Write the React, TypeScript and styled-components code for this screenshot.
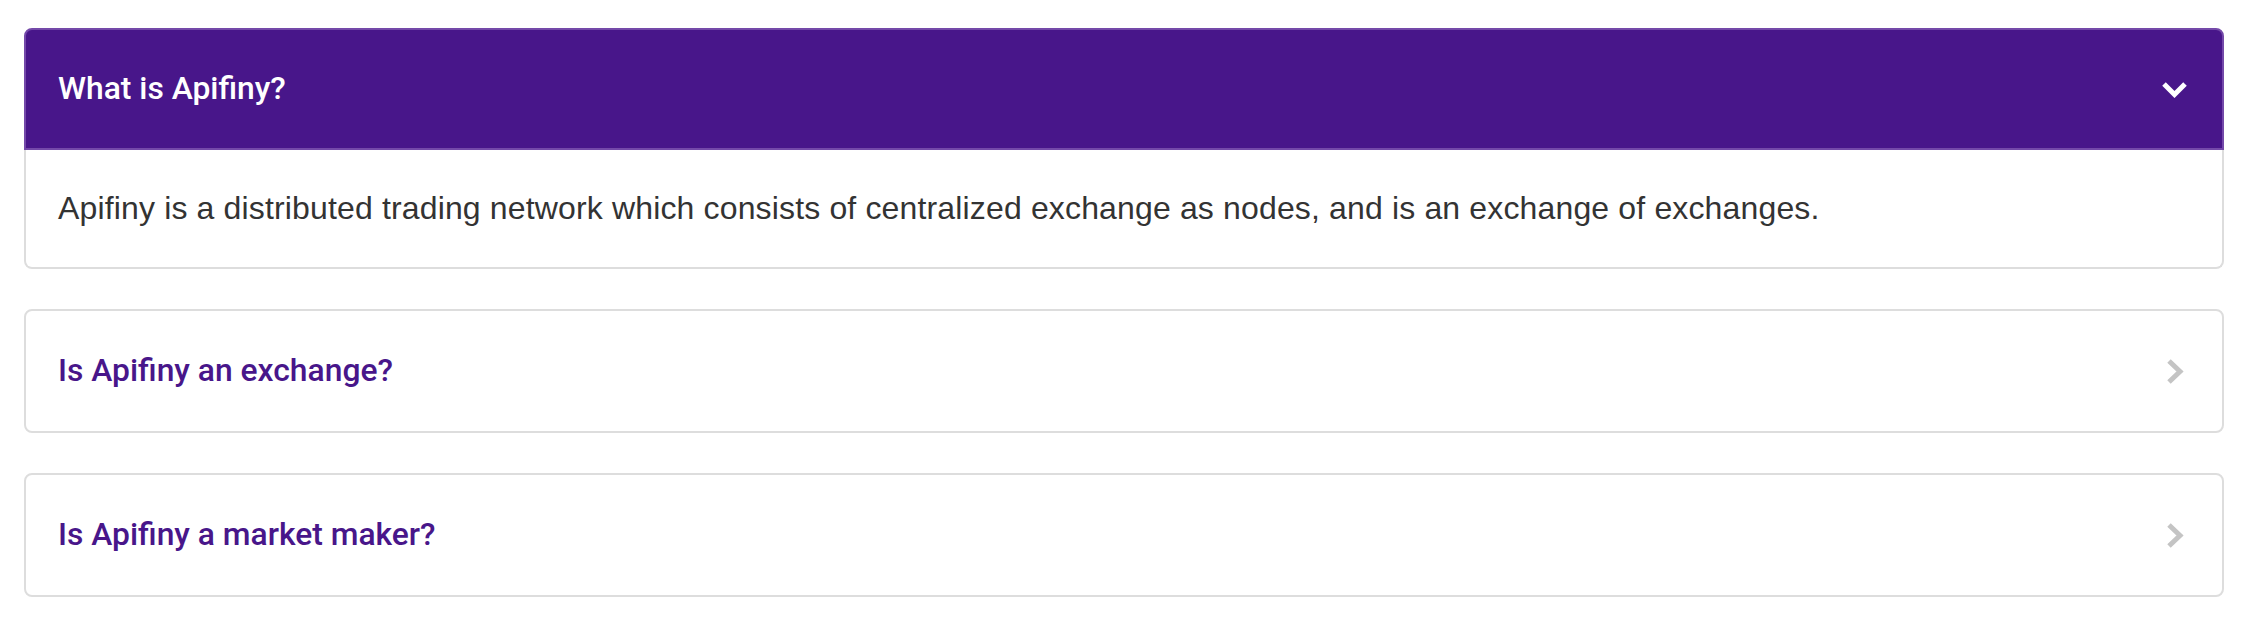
import React, { useState } from "react";
import styled, { createGlobalStyle } from "styled-components";

const GlobalStyle = createGlobalStyle`
  html, body {
    margin: 0;
    padding: 0;
    background: #ffffff;
  }
  * { box-sizing: border-box; }
`;

const PURPLE = "#48168a";

const Page = styled.div`
  padding: 28px 20px 0 24px;
  display: flex;
  flex-direction: column;
  gap: 40px;
`;

const Card = styled.div`
  display: flex;
  flex-direction: column;
`;

const Header = styled.div<{ $open: boolean }>`
  height: ${(p) => (p.$open ? 122 : 124)}px;
  display: flex;
  align-items: center;
  justify-content: space-between;
  padding: 0 34px 0 32px;
  background: ${(p) => (p.$open ? PURPLE : "#ffffff")};
  border: 2px solid ${(p) => (p.$open ? "#7449a9" : "#dddddd")};
  border-radius: ${(p) => (p.$open ? "8px 8px 0 0" : "8px")};
  cursor: pointer;
`;

const Question = styled.h3<{ $open: boolean }>`
  margin: 0;
  font-family: Roboto, "Noto Sans", sans-serif;
  font-weight: 500;
  font-size: 31.8px;
  line-height: 1;
  color: ${(p) => (p.$open ? "#ffffff" : PURPLE)};
`;

const IconBox = styled.span`
  width: 27px;
  height: 27px;
  display: flex;
  align-items: center;
  justify-content: center;
`;

const Body = styled.div`
  height: 119px;
  display: flex;
  align-items: center;
  padding: 0 32px;
  border: 2px solid #dddddd;
  border-top: none;
  border-radius: 0 0 8px 8px;
  font-family: "Liberation Sans", Arial, sans-serif;
  font-size: 32px;
  letter-spacing: 0.15px;
  color: #333333;
`;

const ChevronDown = () => (
  <svg width="27" height="17" viewBox="0 0 27 17">
    <polyline points="3,3 13.5,13.5 24,3" fill="none" stroke="#ffffff" strokeWidth="5" />
  </svg>
);

const ChevronRight = () => (
  <svg width="18" height="27" viewBox="0 0 18 27">
    <polyline points="3,3 14,13.5 3,24" fill="none" stroke="#c4c4c4" strokeWidth="5" />
  </svg>
);

const items = [
  {
    q: "What is Apifiny?",
    a: "Apifiny is a distributed trading network which consists of centralized exchange as nodes, and is an exchange of exchanges.",
  },
  { q: "Is Apifiny an exchange?", a: "" },
  { q: "Is Apifiny a market maker?", a: "" },
];

export default function App() {
  const [open, setOpen] = useState<number>(0);
  return (
    <>
      <GlobalStyle />
      <Page>
        {items.map((it, i) => {
          const isOpen = open === i;
          return (
            <Card key={i}>
              <Header $open={isOpen} onClick={() => setOpen(isOpen ? -1 : i)}>
                <Question $open={isOpen}>{it.q}</Question>
                <IconBox>{isOpen ? <ChevronDown /> : <ChevronRight />}</IconBox>
              </Header>
              {isOpen && <Body>{it.a}</Body>}
            </Card>
          );
        })}
      </Page>
    </>
  );
}
